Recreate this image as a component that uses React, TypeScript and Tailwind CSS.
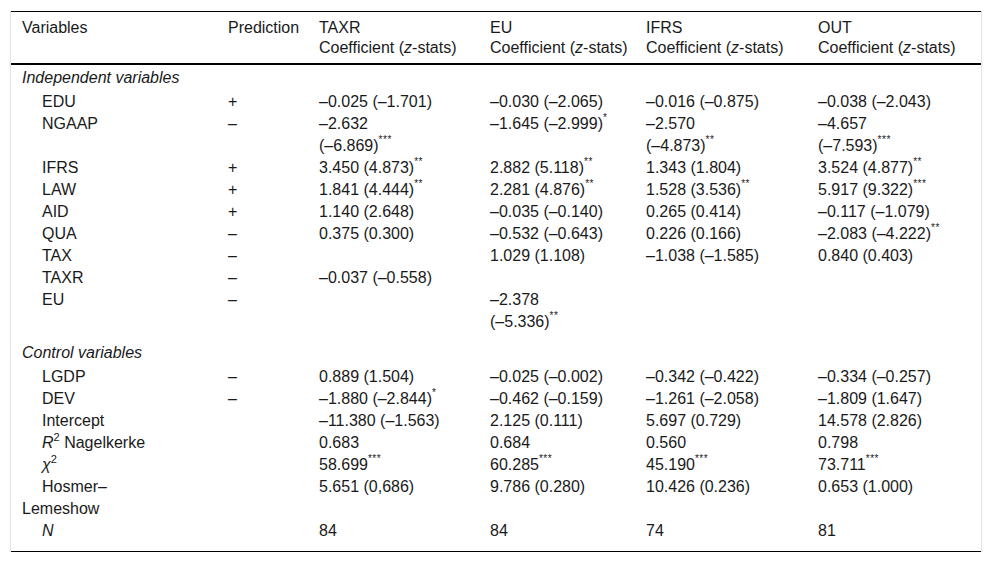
import React from "react";

type Row =
  | { kind: "section"; label: string; spaceBefore?: boolean }
  | { kind: "data"; label: React.ReactNode; pred: string; cells: string[] };

const rows: Row[] = [
  { kind: "section", label: "Independent variables" },
  { kind: "data", label: "EDU", pred: "+", cells: ["–0.025 (–1.701)", "–0.030 (–2.065)", "–0.016 (–0.875)", "–0.038 (–2.043)"] },
  { kind: "data", label: "NGAAP", pred: "–", cells: ["–2.632|(–6.869)^***", "–1.645 (–2.999)^*", "–2.570|(–4.873)^**", "–4.657|(–7.593)^***"] },
  { kind: "data", label: "IFRS", pred: "+", cells: ["3.450 (4.873)^**", "2.882 (5.118)^**", "1.343 (1.804)", "3.524 (4.877)^**"] },
  { kind: "data", label: "LAW", pred: "+", cells: ["1.841 (4.444)^**", "2.281 (4.876)^**", "1.528 (3.536)^**", "5.917 (9.322)^***"] },
  { kind: "data", label: "AID", pred: "+", cells: ["1.140 (2.648)", "–0.035 (–0.140)", "0.265 (0.414)", "–0.117 (–1.079)"] },
  { kind: "data", label: "QUA", pred: "–", cells: ["0.375 (0.300)", "–0.532 (–0.643)", "0.226 (0.166)", "–2.083 (–4.222)^**"] },
  { kind: "data", label: "TAX", pred: "–", cells: ["", "1.029 (1.108)", "–1.038 (–1.585)", "0.840 (0.403)"] },
  { kind: "data", label: "TAXR", pred: "–", cells: ["–0.037 (–0.558)", "", "", ""] },
  { kind: "data", label: "EU", pred: "–", cells: ["", "–2.378|(–5.336)^**", "", ""] },
  { kind: "section", label: "Control variables", spaceBefore: true },
  { kind: "data", label: "LGDP", pred: "–", cells: ["0.889 (1.504)", "–0.025 (–0.002)", "–0.342 (–0.422)", "–0.334 (–0.257)"] },
  { kind: "data", label: "DEV", pred: "–", cells: ["–1.880 (–2.844)^*", "–0.462 (–0.159)", "–1.261 (–2.058)", "–1.809 (1.647)"] },
  { kind: "data", label: "Intercept", pred: "", cells: ["–11.380 (–1.563)", "2.125 (0.111)", "5.697 (0.729)", "14.578 (2.826)"] },
  {
    kind: "data",
    label: (
      <>
        <i>R</i>
        <sup className="text-[11px] top-[-0.6em]">2</sup> Nagelkerke
      </>
    ),
    pred: "",
    cells: ["0.683", "0.684", "0.560", "0.798"],
  },
  {
    kind: "data",
    label: (
      <>
        <i>χ</i>
        <sup className="text-[11px] top-[-0.6em]">2</sup>
      </>
    ),
    pred: "",
    cells: ["58.699^***", "60.285^***", "45.190^***", "73.711^***"],
  },
  {
    kind: "data",
    label: (
      <>
        Hosmer–
        <br />
        Lemeshow
      </>
    ),
    pred: "",
    cells: ["5.651 (0,686)", "9.786 (0.280)", "10.426 (0.236)", "0.653 (1.000)"],
  },
  { kind: "data", label: <i>N</i>, pred: "", cells: ["84", "84", "74", "81"] },
];

const grid = "grid grid-cols-[206px_91px_171px_156px_172px_174px]";

function Value({ text }: { text: string }) {
  if (!text) return null;
  const lines = text.split("|");
  return (
    <>
      {lines.map((line, i) => {
        const [main, stars] = line.split("^");
        return (
          <React.Fragment key={i}>
            {i > 0 && <br />}
            {main}
            {stars && (
              <sup className="text-[10px] top-[-0.85em] tracking-[0.5px]">{stars}</sup>
            )}
          </React.Fragment>
        );
      })}
    </>
  );
}

const heads = ["TAXR", "EU", "IFRS", "OUT"];

export default function App() {
  return (
    <div className="bg-white w-[992px] h-[562px] pt-[11px] pl-[10px] font-['Liberation_Sans',Arial,sans-serif] text-[16px] text-[#1a1a1a]">
      <div className="w-[972px] border-x border-[#e4e4e4]">
        <div className="border-t border-black">
          <div className={`${grid} leading-[20px] pt-[6px] pb-[5px] border-b-2 border-black`}>
            <div className="pl-[11px]">Variables</div>
            <div className="pl-[11px]">Prediction</div>
            {heads.map((h) => (
              <div key={h} className="pl-[11px]">
                {h}
                <br />
                Coefficient (<i>z</i>-stats)
              </div>
            ))}
          </div>
          <div className="leading-[22px] pt-[2px] pb-[9px] border-b border-black">
            {rows.map((r, idx) =>
              r.kind === "section" ? (
                <div key={idx} className={`pl-[11px] pb-[2px] italic ${r.spaceBefore ? "mt-[9px]" : ""}`}>
                  {r.label}
                </div>
              ) : (
                <div key={idx} className={grid}>
                  <div className="pl-[11px] indent-5">{r.label}</div>
                  <div className="pl-[11px]">{r.pred}</div>
                  {r.cells.map((c, j) => (
                    <div key={j} className="pl-[11px]">
                      <Value text={c} />
                    </div>
                  ))}
                </div>
              )
            )}
          </div>
        </div>
      </div>
    </div>
  );
}
